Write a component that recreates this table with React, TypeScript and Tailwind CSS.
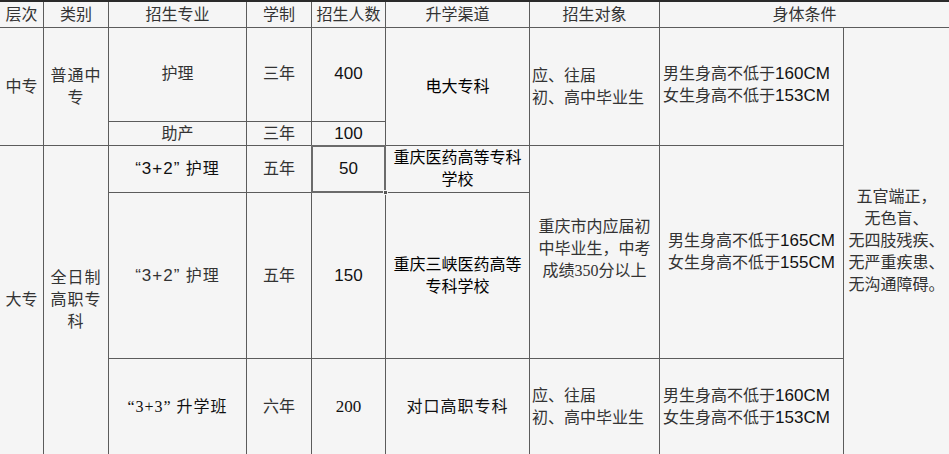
import React from 'react';

const sans = { fontFamily: '"Liberation Sans","Noto Sans CJK SC",sans-serif' };
const serif = { fontFamily: '"Liberation Serif","Noto Sans CJK SC",serif' };

type CellProps = {
  className: string;
  children?: React.ReactNode;
  serifFont?: boolean;
};

const Cell = ({ className, children, serifFont }: CellProps) => (
  <div
    style={serifFont ? serif : sans}
    className={`flex items-center border-[#5c5c5c] text-[16px] leading-[22px] ${className}`}
  >
    {children}
  </div>
);

const Height = ({ male, female, center }: { male: string; female: string; center?: boolean }) => (
  <div className={center ? 'w-full text-center' : 'w-full pl-[3px] text-left'}>
    男生身高不低于<span className="text-[17px] text-[#111]">{male}CM</span>
    <br />
    女生身高不低于<span className="text-[17px] text-[#111]">{female}CM</span>
  </div>
);

export default function App() {
  return (
    <div className="w-[949px] h-[454px] overflow-hidden bg-[#f5f5f5] text-[#333]">
      <div className="grid grid-cols-[44px_65px_138px_65px_74px_144px_130px_184px_105px] grid-rows-[26px_94px_24px_47px_166px_95px] border-t-2 border-[#2a2a2a]">
        {/* header */}
        <Cell className="col-start-1 row-start-1 justify-center border-b border-r">层次</Cell>
        <Cell className="col-start-2 row-start-1 justify-center border-b border-r">类别</Cell>
        <Cell className="col-start-3 row-start-1 justify-center border-b border-r">招生专业</Cell>
        <Cell className="col-start-4 row-start-1 justify-center border-b border-r">学制</Cell>
        <Cell className="col-start-5 row-start-1 justify-center border-b border-r">招生人数</Cell>
        <Cell className="col-start-6 row-start-1 justify-center border-b border-r">升学渠道</Cell>
        <Cell className="col-start-7 row-start-1 justify-center border-b border-r">招生对象</Cell>
        <Cell className="col-start-8 col-span-2 row-start-1 justify-center border-b">身体条件</Cell>

        {/* 层次 / 类别 */}
        <Cell className="col-start-1 row-start-2 row-span-2 justify-center border-b border-r">中专</Cell>
        <Cell className="col-start-2 row-start-2 row-span-2 justify-center text-center border-b border-r px-[6px] tracking-[1px]">
          普通中
          <br />专
        </Cell>
        <Cell className="col-start-1 row-start-4 row-span-3 justify-center border-r">大专</Cell>
        <Cell className="col-start-2 row-start-4 row-span-3 justify-center text-center border-r tracking-[1px]">
          <div>
            全日制
            <br />
            高职专
            <br />科
          </div>
        </Cell>

        {/* 招生专业 */}
        <Cell className="col-start-3 row-start-2 justify-center border-b border-r pb-[2px]">护理</Cell>
        <Cell className="col-start-3 row-start-3 justify-center border-b border-r">助产</Cell>
        <Cell className="col-start-3 row-start-4 justify-center border-b border-r text-[#111] tracking-[1px]">
          <span className="text-[17px]">“3+2”</span>&nbsp;护理
        </Cell>
        <Cell className="col-start-3 row-start-5 justify-center border-b border-r tracking-[1px]">
          <span className="text-[17px]">“3+2”</span>&nbsp;护理
        </Cell>
        <Cell serifFont className="col-start-3 row-start-6 justify-center border-r text-[#111] tracking-[1px]">
          “3+3” 升学班
        </Cell>

        {/* 学制 */}
        <Cell className="col-start-4 row-start-2 justify-center border-b border-r pb-[2px]">三年</Cell>
        <Cell className="col-start-4 row-start-3 justify-center border-b border-r">三年</Cell>
        <Cell className="col-start-4 row-start-4 justify-center border-b border-r">五年</Cell>
        <Cell className="col-start-4 row-start-5 justify-center border-b border-r">五年</Cell>
        <Cell className="col-start-4 row-start-6 justify-center border-r">六年</Cell>

        {/* 招生人数 */}
        <Cell className="col-start-5 row-start-2 justify-center border-b border-r text-[17px] text-[#111] pb-[2px]">400</Cell>
        <Cell className="col-start-5 row-start-3 justify-center border-b border-r text-[17px] text-[#111]">100</Cell>
        <Cell className="relative col-start-5 row-start-4 justify-center border-b border-r text-[17px] text-[#111]">
          50
          <span className="absolute -left-px -top-px -right-px -bottom-px border-2 border-[#6b6b6b]" />
          <span className="absolute -right-[3px] -bottom-[3px] h-[5px] w-[5px] border border-[#f5f5f5] bg-[#555]" />
        </Cell>
        <Cell className="col-start-5 row-start-5 justify-center border-b border-r text-[17px] text-[#111]">150</Cell>
        <Cell serifFont className="col-start-5 row-start-6 justify-center border-r text-[17px] text-[#111]">200</Cell>

        {/* 升学渠道 */}
        <Cell className="col-start-6 row-start-2 row-span-2 justify-center border-b border-r text-[#000]">
          电大专科
        </Cell>
        <Cell className="col-start-6 row-start-4 justify-center text-center border-b border-r text-[#000]">
          <div>
            重庆医药高等专科
            <br />
            学校
          </div>
        </Cell>
        <Cell className="col-start-6 row-start-5 justify-center text-center border-b border-r text-[#000]">
          <div>
            重庆三峡医药高等
            <br />
            专科学校
          </div>
        </Cell>
        <Cell serifFont className="col-start-6 row-start-6 justify-center border-r text-[#111] tracking-[1px]">
          对口高职专科
        </Cell>

        {/* 招生对象 */}
        <Cell className="col-start-7 row-start-2 row-span-2 border-b border-r pl-[2px]">
          <div>
            应、往届
            <br />
            初、高中毕业生
          </div>
        </Cell>
        <Cell className="col-start-7 row-start-4 row-span-2 justify-center text-center border-b border-r pb-[6px]">
          <div>
            重庆市内应届初
            <br />
            中毕业生，中考
            <br />
            <span style={serif}>成绩350分以上</span>
          </div>
        </Cell>
        <Cell className="col-start-7 row-start-6 border-r pl-[2px]">
          <div>
            应、往届
            <br />
            初、高中毕业生
          </div>
        </Cell>

        {/* 身体条件 */}
        <Cell className="col-start-8 row-start-2 row-span-2 border-b border-r pb-[4px]">
          <Height male="160" female="153" />
        </Cell>
        <Cell className="col-start-8 row-start-4 row-span-2 border-b border-r">
          <Height male="165" female="155" center />
        </Cell>
        <Cell className="col-start-8 row-start-6 border-r">
          <Height male="160" female="153" />
        </Cell>
        <Cell className="col-start-9 row-start-2 row-span-5 justify-center text-center">
          <div>
            五官端正，
            <br />
            无色盲、
            <br />
            无四肢残疾、
            <br />
            无严重疾患、
            <br />
            无沟通障碍。
          </div>
        </Cell>
      </div>
    </div>
  );
}
